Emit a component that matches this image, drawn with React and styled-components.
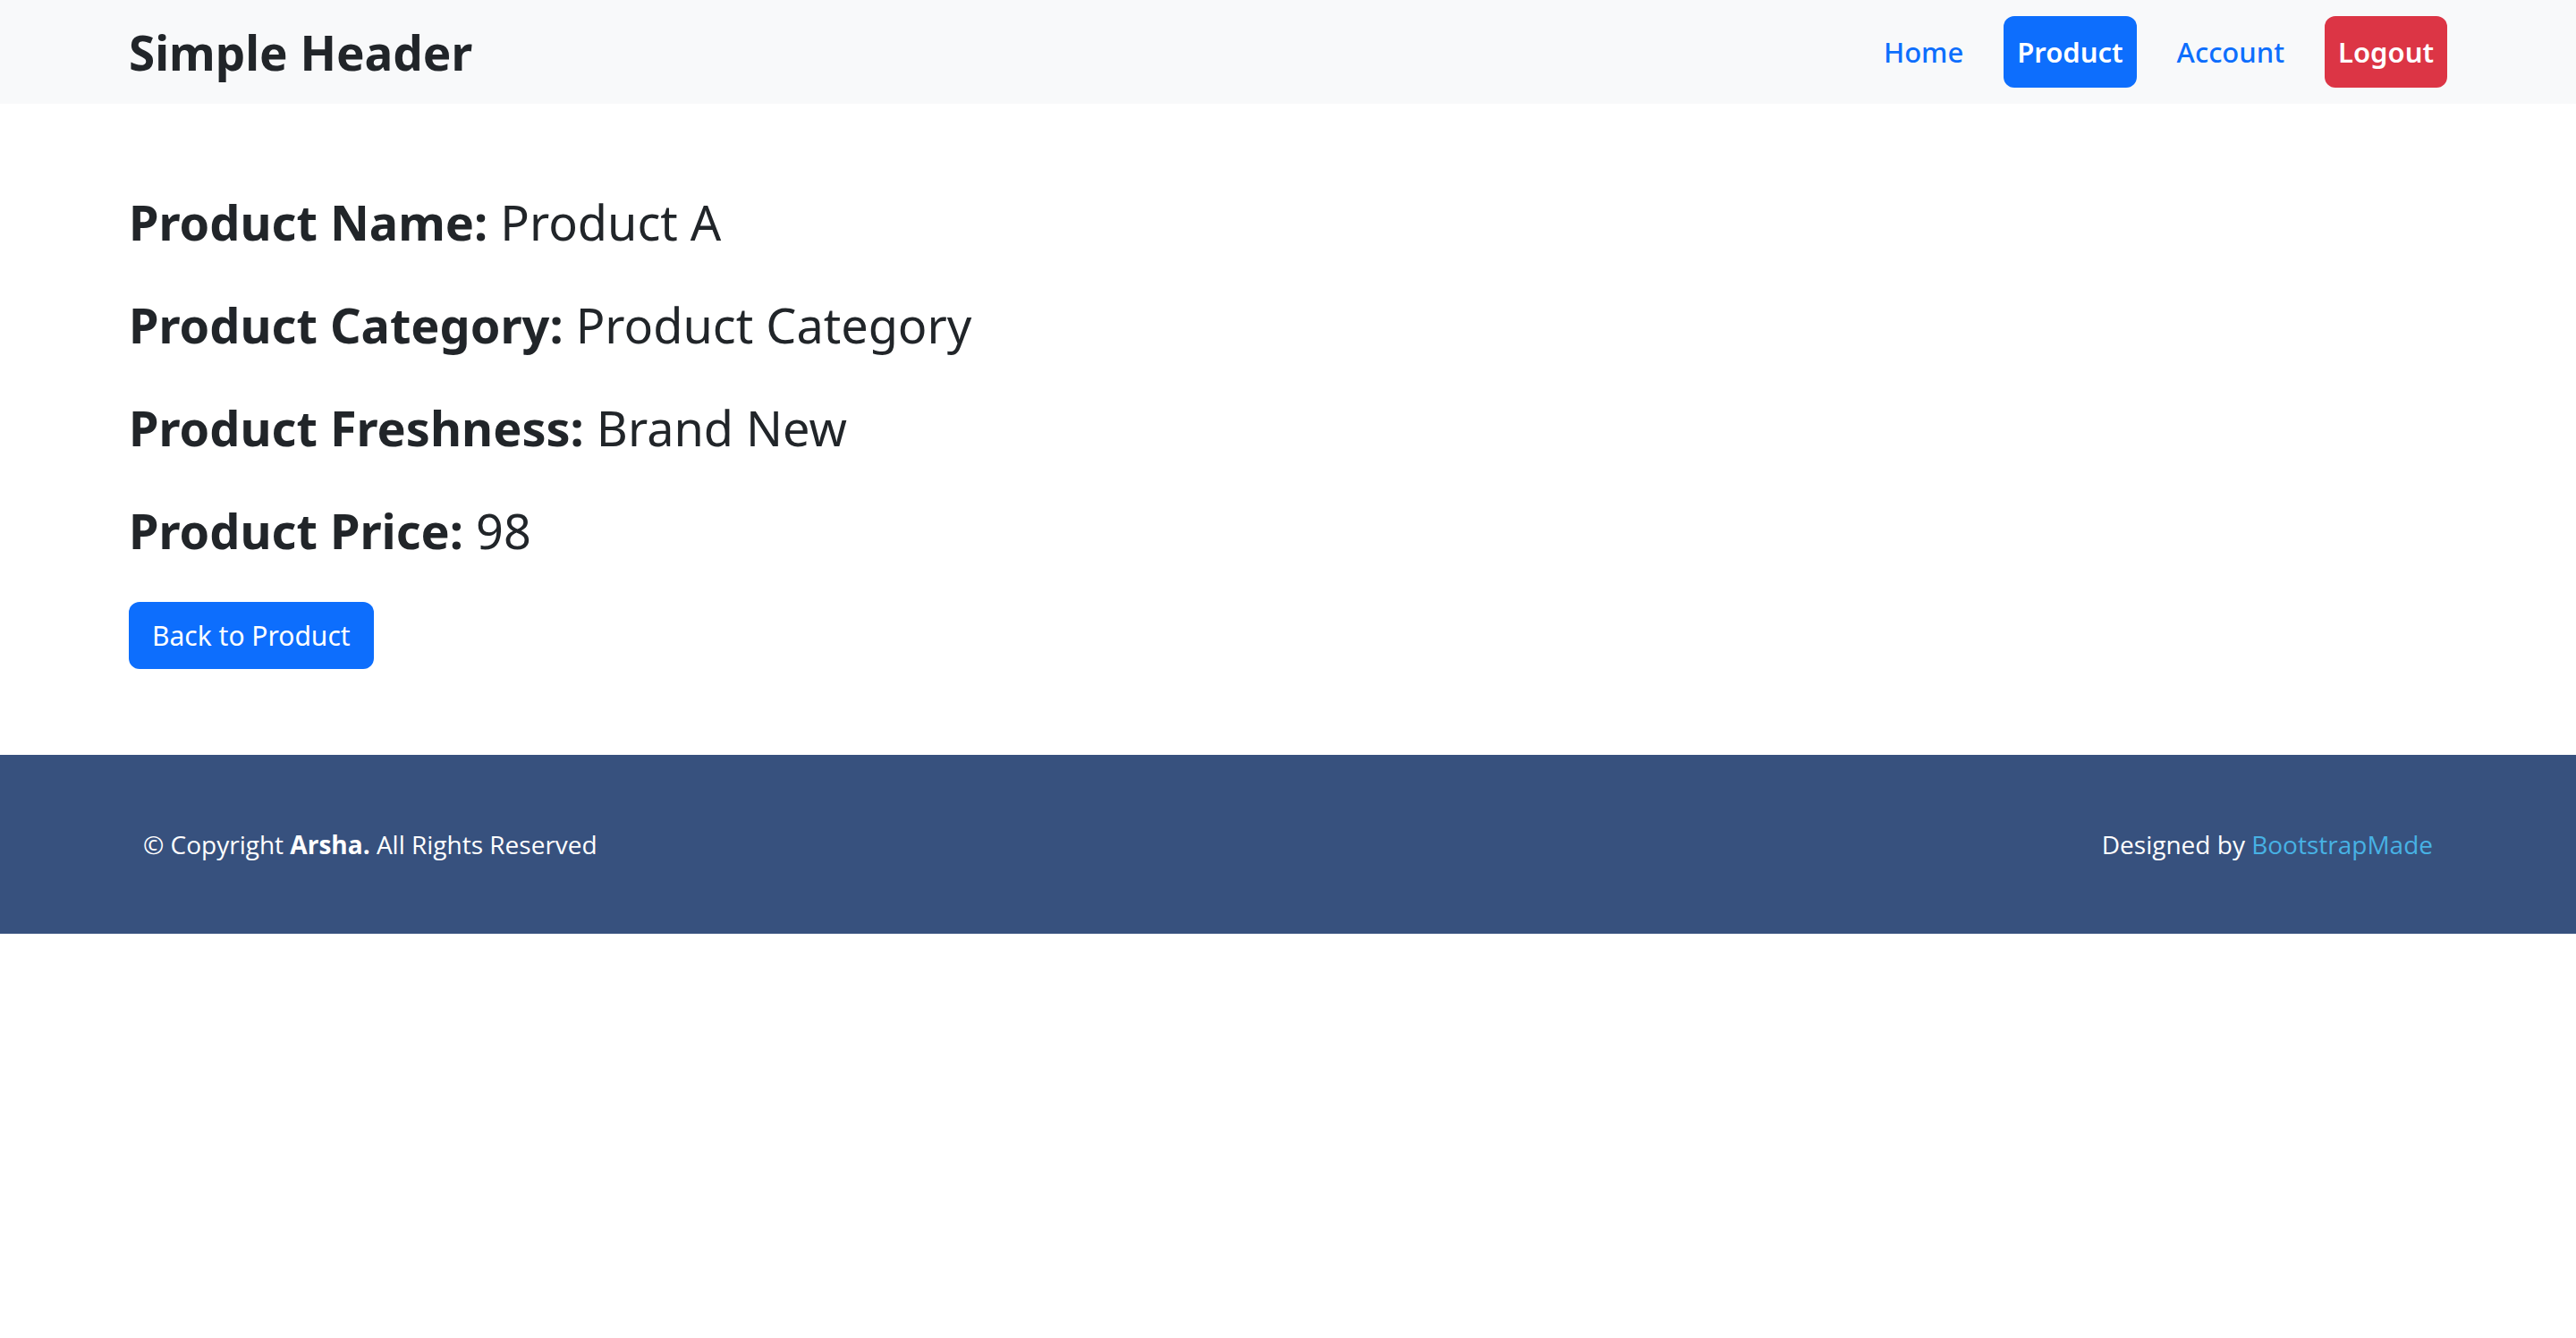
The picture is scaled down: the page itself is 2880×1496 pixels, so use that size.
import React from "react";
import styled, { createGlobalStyle } from "styled-components";

const GlobalStyle = createGlobalStyle`
  * { box-sizing: border-box; }
  body {
    margin: 0;
    background: #fff;
    color: #212529;
    font-family: "Noto Sans", "Open Sans", sans-serif;
  }
`;

const Page = styled.div`
  min-height: 100vh;
  display: flex;
  flex-direction: column;
`;

const Header = styled.header`
  height: 116px;
  background: #f8f9fa;
  padding: 0 144px;
  display: flex;
  align-items: center;
  justify-content: space-between;
`;

const Brand = styled.h1`
  margin: 0;
  font-size: 53px;
  font-weight: 700;
  color: #212529;
`;

const Nav = styled.nav`
  display: flex;
  align-items: center;
  gap: 32px;
`;

const NavLink = styled.a`
  display: block;
  padding: 16px ${p => (p.$variant ? "15px" : "13px")};
  font-size: 31px;
  line-height: 48px;
  font-weight: ${p => (p.$variant ? 600 : 500)};
  border-radius: 12px;
  text-decoration: none;
  cursor: pointer;
  color: ${p => (p.$variant ? "#fff" : "#0d6efd")};
  background: ${p =>
    p.$variant === "primary" ? "#0d6efd" : p.$variant === "danger" ? "#dc3545" : "transparent"};
`;

const Main = styled.main`
  padding: 97px 144px 96px;
  display: flex;
  flex-direction: column;
  align-items: flex-start;
`;

const InfoLine = styled.h2`
  margin: 0 0 45px;
  font-size: 54px;
  line-height: 70px;
  font-weight: 400;

  strong { font-weight: 700; }
`;

const BackButton = styled.button`
  height: 75px;
  padding: 0 26px;
  border: none;
  border-radius: 12px;
  background: #0d6efd;
  color: #fff;
  font-family: "Noto Sans", sans-serif;
  font-size: 30px;
  cursor: pointer;
`;

const Footer = styled.footer`
  height: 200px;
  background: #37517e;
  color: #fff;
  padding: 0 160px;
  display: flex;
  align-items: center;
  justify-content: space-between;
  font-family: "Open Sans", sans-serif;
  font-size: 28px;

  strong { font-weight: 700; }
  a { color: #47b2e4; text-decoration: none; }
`;

export default function App() {
  return (
    <Page>
      <GlobalStyle />
      <Header>
        <Brand>Simple Header</Brand>
        <Nav>
          <NavLink>Home</NavLink>
          <NavLink $variant="primary">Product</NavLink>
          <NavLink>Account</NavLink>
          <NavLink $variant="danger">Logout</NavLink>
        </Nav>
      </Header>

      <Main>
        <InfoLine><strong>Product Name:</strong> Product A</InfoLine>
        <InfoLine><strong>Product Category:</strong> Product Category</InfoLine>
        <InfoLine><strong>Product Freshness:</strong> Brand New</InfoLine>
        <InfoLine><strong>Product Price:</strong> 98</InfoLine>
        <BackButton>Back to Product</BackButton>
      </Main>

      <Footer>
        <div>© Copyright <strong>Arsha.</strong> All Rights Reserved</div>
        <div>Designed by <a>BootstrapMade</a></div>
      </Footer>
    </Page>
  );
}
